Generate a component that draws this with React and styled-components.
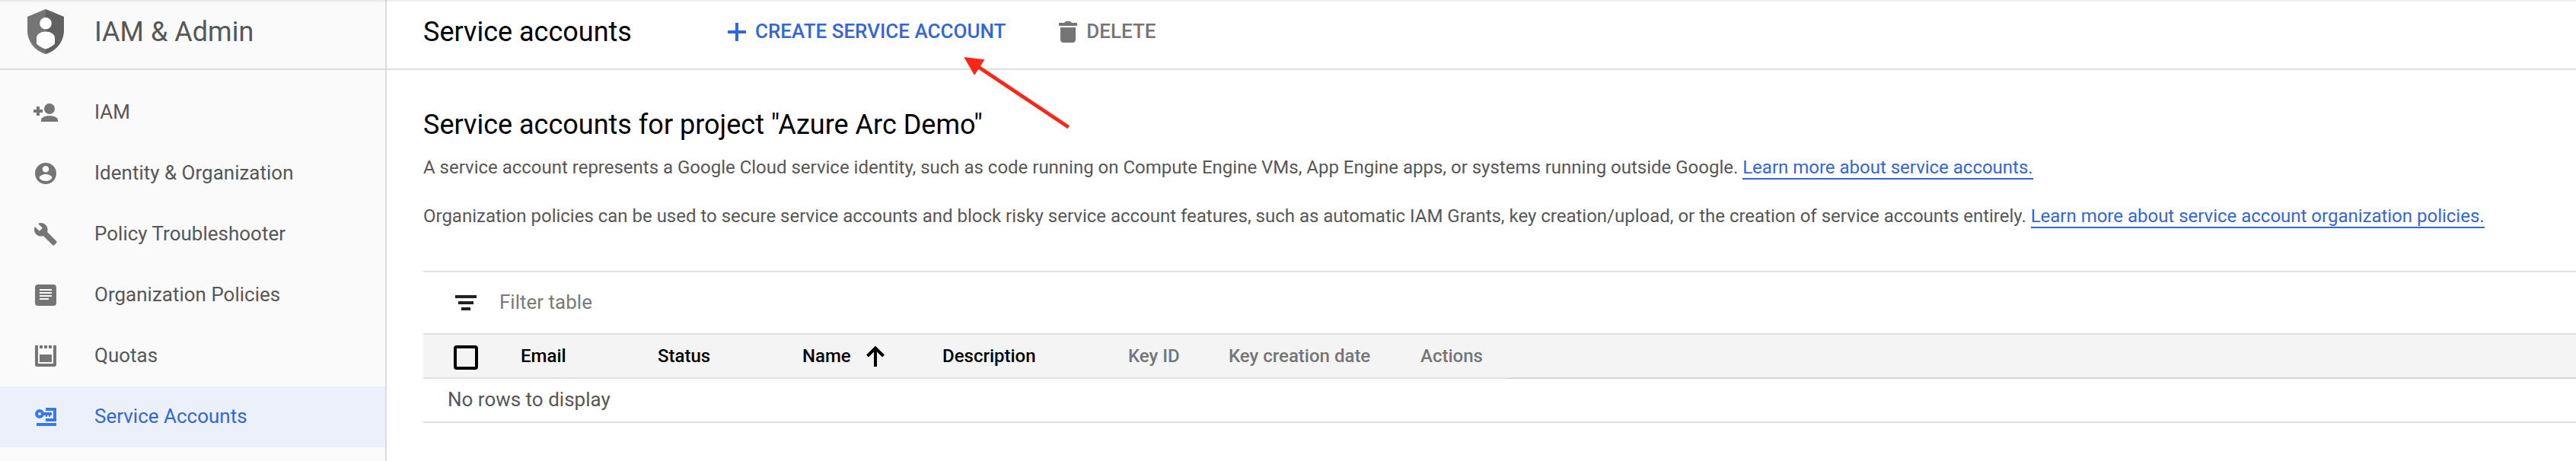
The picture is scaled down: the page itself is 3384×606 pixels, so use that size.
import React from "react";
import styled, { createGlobalStyle } from "styled-components";

const GlobalStyle = createGlobalStyle`
  * { box-sizing: border-box; }
  body {
    margin: 0;
    background: #fff;
    font-family: Roboto, "Liberation Sans", sans-serif;
    font-size: 26px;
    color: #575757;
    overflow: hidden;
  }
  svg { display: block; flex: none; }
`;

const Page = styled.div`
  position: relative;
  display: flex;
  height: 606px;
  overflow: hidden;
`;

const TopShadow = styled.div`
  position: absolute;
  inset: 0 0 auto 0;
  height: 4px;
  background: linear-gradient(rgba(0, 0, 0, 0.08), rgba(0, 0, 0, 0));
`;

const Sidebar = styled.nav`
  flex: none;
  width: 508px;
  background: #fafafa;
  border-right: 2px solid #dcdcdc;
`;

const SidebarHeader = styled.header`
  display: flex;
  gap: 40px;
  height: 92px;
  padding-left: 36px;
  border-bottom: 2px solid #dedede;

  svg { margin-top: 12px; }
`;

const SidebarTitle = styled.h1`
  margin: 0;
  font-size: 36px;
  font-weight: 400;
  line-height: 84px;
`;

const NavList = styled.ul`
  list-style: none;
  margin: 0;
  padding: 16px 0 0;
`;

const NavItem = styled.li`
  display: flex;
  align-items: center;
  gap: 46px;
  height: 80px;
  padding-left: 42px;
  background: ${(p) => (p.$selected ? "#ebf0fa" : "transparent")};
  color: ${(p) => (p.$selected ? "#3367d6" : "#575757")};

  svg { fill: ${(p) => (p.$selected ? "#3b78e7" : "#757575")}; }
`;

const NavLabel = styled.span`
  line-height: 78px;
  padding-bottom: 2px;
`;

const Main = styled.main`
  flex: 1;
  min-width: 0;
`;

const Toolbar = styled.header`
  display: flex;
  height: 92px;
  padding-left: 48px;
  border-bottom: 2px solid #dedede;
`;

const ToolbarTitle = styled.h2`
  width: 400px;
  margin: 0;
  color: #000;
  font-size: 36px;
  font-weight: 400;
  line-height: 84px;
`;

const ToolbarButton = styled.button`
  display: flex;
  align-items: center;
  gap: 12px;
  height: 84px;
  margin: 0 70px 0 0;
  padding: 0;
  border: 0;
  background: none;
  font: 500 26px/30px Roboto, "Liberation Sans", sans-serif;
  white-space: nowrap;
  color: ${(p) => (p.$primary ? "#3367d6" : "#757575")};

  svg { fill: currentColor; }
  span { padding-bottom: 2px; }
`;

const Content = styled.section`
  padding: 51px 0 0 48px;
`;

const Heading = styled.h3`
  margin: 0 0 15px;
  color: #000;
  font-size: 36px;
  font-weight: 400;
  line-height: 42px;
`;

const Paragraph = styled.p`
  margin: 0 0 24px;
  font-size: 24px;
  line-height: 40px;
  letter-spacing: -0.008px;
  white-space: nowrap;
`;

const Link = styled.a`
  color: #3367d6;
  border-bottom: 2px solid #3367d6;
`;

const Table = styled.div`
  margin-top: 52px;
  border-top: 2px solid #e0e0e0;
`;

const FilterBar = styled.div`
  display: flex;
  align-items: center;
  gap: 30px;
  height: 82px;
  padding-left: 42px;
  border-bottom: 2px solid #e0e0e0;
  color: #7a7a7a;

  svg { fill: #212121; }
  span { padding-bottom: 2px; }
`;

const HeaderRow = styled.div`
  display: grid;
  grid-template-columns: 128px 180px 190px 184px 244px 132px 252px 116px 1fr;
  height: 58px;
  background: #f4f4f4;
`;

const HeaderCell = styled.div`
  display: flex;
  align-items: center;
  gap: 19px;
  border-bottom: 2px solid ${(p) => (p.$filler ? "#d6d6d6" : "#e0e0e0")};
  padding-left: ${(p) => (p.$select ? "40px" : "0")};
  font-size: 24px;
  font-weight: 500;
  color: ${(p) => (p.$sortable ? "#000" : "#757575")};
`;

const Checkbox = styled.span`
  width: 32px;
  height: 32px;
  margin-top: 4px;
  border: 4px solid #000;
  border-radius: 4px;
`;

const EmptyRow = styled.div`
  height: 58px;
  padding-left: 32px;
  border-bottom: 2px solid #e0e0e0;
  line-height: 54px;
`;

const PointerArrow = styled.svg`
  position: absolute;
  left: 1260px;
  top: 70px;
`;

const ShieldIcon = () => (
  <svg width="48" height="60" viewBox="0 0 48 60">
    <path fill="#757575" d="M24 0 0 10v18c0 14 9.500 27 24 31z" />
    <path fill="#616161" d="M24 0 48 10v18c0 14-9.500 27-24 31z" />
    <circle cx="24" cy="18.700" r="7.800" fill="#fff" />
    <path fill="#fff" d="M24 29.500c-6 0-12 3-12 8.500v7.500c3 3 7 5.500 12 7 5-1.500 9-4 12-7V38c0-5.500-6-8.500-12-8.500z" />
  </svg>
);

const NavIcon = ({ children }) => (
  <svg width="36" height="36" viewBox="0 0 36 36">{children}</svg>
);

const navItems = [
  {
    label: "IAM",
    icon: (
      <>
        <path d="M2 14h4v-4h4v4h4v4h-4v4H6v-4H2z" />
        <circle cx="23" cy="13" r="7" />
        <path d="M12 30v-2c0-4 6-5.700 11-5.700S34 24 34 28v2z" />
      </>
    ),
  },
  {
    label: "Identity & Organization",
    icon: (
      <path
        fillRule="evenodd"
        d="M18 4a14 14 0 1 0 0 28 14 14 0 0 0 0-28zm0 4a4.300 4.300 0 1 1 0 8.600A4.300 4.300 0 0 1 18 8zm0 20c-3.500 0-6.500-1.500-8.400-4.100 0-3.300 5.600-5 8.400-5s8.400 1.700 8.400 5C24.500 26.500 21.500 28 18 28z"
      />
    ),
  },
  {
    label: "Policy Troubleshooter",
    icon: (
      <path
        transform="translate(1.700 1.600) scale(1.350)"
        d="M22.700 19l-9.100-9.100c.9-2.300.4-5-1.500-6.900-2-2-5-2.400-7.400-1.300L9 6 6 9 1.600 4.700C.4 7.100.9 10.100 2.900 12.100c1.900 1.900 4.600 2.400 6.900 1.500l9.100 9.100c.4.4 1 .4 1.400 0l2.300-2.300c.5-.4.5-1.100.1-1.400z"
      />
    ),
  },
  {
    label: "Organization Policies",
    icon: (
      <path
        fillRule="evenodd"
        d="M8 4h20a4 4 0 0 1 4 4v20a4 4 0 0 1-4 4H8a4 4 0 0 1-4-4V8a4 4 0 0 1 4-4zm2 6v2h16v-2zm0 4v2h16v-2zm0 4v2h16v-2zm0 4v2h12v-2z"
      />
    ),
  },
  {
    label: "Quotas",
    icon: (
      <path d="M4 4h4v24h20V4h4v25a3 3 0 0 1-3 3H7a3 3 0 0 1-3-3zM10 4h4v4h-4zM16 4h4v4h-4zM22 4h4v4h-4zM10 16h16v10H10z" />
    ),
  },
  {
    label: "Service Accounts",
    selected: true,
    icon: (
      <>
        <path fillRule="evenodd" d="M10 8a6 6 0 1 0 0 12 6 6 0 0 0 0-12zm0 4a2 2 0 1 1 0 4 2 2 0 0 1 0-4z" />
        <path d="M15 12h11v4h-2v2h-2v-2h-2v2h-2v-2h-3zM18 6h14v18H18v-4h10V10H18zM6 26h26v4H6z" />
      </>
    ),
  },
];

const columns = [
  { label: "Email", sortable: true },
  { label: "Status", sortable: true },
  { label: "Name", sortable: true, sorted: true },
  { label: "Description", sortable: true },
  { label: "Key ID" },
  { label: "Key creation date" },
  { label: "Actions" },
];

export default function App() {
  return (
    <Page>
      <GlobalStyle />
      <Sidebar>
        <SidebarHeader>
          <ShieldIcon />
          <SidebarTitle>IAM &amp; Admin</SidebarTitle>
        </SidebarHeader>
        <NavList>
          {navItems.map((item) => (
            <NavItem key={item.label} $selected={item.selected}>
              <NavIcon>{item.icon}</NavIcon>
              <NavLabel>{item.label}</NavLabel>
            </NavItem>
          ))}
        </NavList>
      </Sidebar>
      <Main>
        <Toolbar>
          <ToolbarTitle>Service accounts</ToolbarTitle>
          <ToolbarButton $primary>
            <svg width="24" height="24" viewBox="0 0 24 24">
              <path d="M10 0h4v10h10v4H14v10h-4V14H0v-4h10z" />
            </svg>
            <span>CREATE SERVICE ACCOUNT</span>
          </ToolbarButton>
          <ToolbarButton>
            <svg width="24" height="28" viewBox="0 0 24 28">
              <path d="M7 2l2-2h6l2 2h7v4H0V2zM2 8h20v16a4 4 0 0 1-4 4H6a4 4 0 0 1-4-4z" />
            </svg>
            <span>DELETE</span>
          </ToolbarButton>
        </Toolbar>
        <Content>
          <Heading>Service accounts for project "Azure Arc Demo"</Heading>
          <Paragraph>
            A service account represents a Google Cloud service identity, such as code running on
            Compute Engine VMs, App Engine apps, or systems running outside Google.{" "}
            <Link>Learn more about service accounts.</Link>
          </Paragraph>
          <Paragraph>
            Organization policies can be used to secure service accounts and block risky service
            account features, such as automatic IAM Grants, key creation/upload, or the creation of
            service accounts entirely. <Link>Learn more about service account organization policies.</Link>
          </Paragraph>
          <Table>
            <FilterBar>
              <svg width="28" height="20" viewBox="0 0 28 20">
                <path d="M0 0h28v4H0zM4 8h20v4H4zM8 16h12v4H8z" />
              </svg>
              <span>Filter table</span>
            </FilterBar>
            <HeaderRow>
              <HeaderCell $select>
                <Checkbox />
              </HeaderCell>
              {columns.map((col) => (
                <HeaderCell key={col.label} $sortable={col.sortable}>
                  {col.label}
                  {col.sorted && (
                    <svg width="26" height="28" viewBox="0 0 26 28" fill="none" stroke="#000" strokeWidth="4">
                      <path d="M2.500 14 13 3.500 23.500 14M13 4v24" />
                    </svg>
                  )}
                </HeaderCell>
              ))}
              <HeaderCell $filler />
            </HeaderRow>
            <EmptyRow>No rows to display</EmptyRow>
          </Table>
        </Content>
      </Main>
      <TopShadow />
      <PointerArrow width="150" height="104" viewBox="0 0 150 104">
        <path d="M26 18.500 143.800 97.300" stroke="#ff2617" strokeWidth="4.800" />
        <path d="M6.300 5 33.500 8.300 20 29z" fill="#ff2617" />
      </PointerArrow>
    </Page>
  );
}
